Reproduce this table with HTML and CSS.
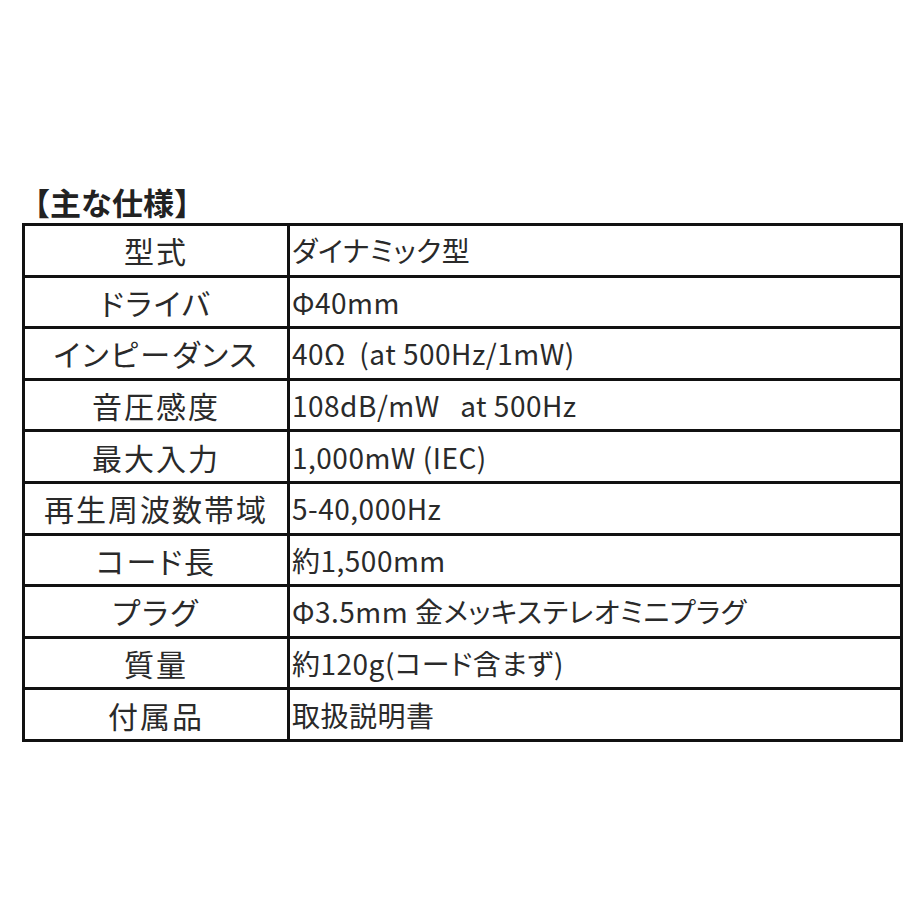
FILE: index.html
```html
<!DOCTYPE html>
<html lang="ja">
<head>
<meta charset="utf-8">
<title>主な仕様</title>
<link rel="stylesheet" href="styles.css">
</head>
<body>
<div class="page">
  <h1 class="title">【主な仕様】</h1>
  <table class="spec">
    <tbody>
      <tr><th>型式</th><td>ダイナミック型</td></tr>
      <tr><th>ドライバ</th><td>Φ40mm</td></tr>
      <tr><th>インピーダンス</th><td>40Ω&nbsp;&nbsp;(at 500Hz/1mW)</td></tr>
      <tr><th>音圧感度</th><td>108dB/mW&nbsp;&nbsp;&nbsp;at 500Hz</td></tr>
      <tr><th>最大入力</th><td>1,000mW (IEC)</td></tr>
      <tr><th>再生周波数帯域</th><td>5-40,000Hz</td></tr>
      <tr><th>コード長</th><td>約1,500mm</td></tr>
      <tr><th>プラグ</th><td>Φ3.5mm 金メッキステレオミニプラグ</td></tr>
      <tr><th>質量</th><td>約120g(コード含まず)</td></tr>
      <tr><th>付属品</th><td>取扱説明書</td></tr>
    </tbody>
  </table>
</div>
</body>
</html>
```

FILE: styles.css
```css
html, body {
  margin: 0;
  padding: 0;
  background: #ffffff;
}

.page {
  padding: 180px 0 0 22px;
  font-family: "Noto Sans CJK JP", "Noto Sans", sans-serif;
  color: #2a2a2a;
}

.title {
  margin: 0 0 0 -3px;
  font-size: 31px;
  line-height: 43px;
  height: 43px;
  font-weight: 700;
  color: #222;
}

.spec {
  border-collapse: collapse;
  width: 881px;
  table-layout: fixed;
}

.spec tr {
  height: 51.6px;
}

.spec th,
.spec td {
  border: 3px solid #111;
  padding: 0;
  line-height: 1;
  vertical-align: middle;
}

.spec th {
  width: 262px;
  font-size: 30px;
  font-weight: 400;
  text-align: center;
  font-feature-settings: "palt";
  letter-spacing: 2px;
}

.spec td {
  font-size: 28px;
  text-align: left;
  padding-left: 2px;
  font-feature-settings: "palt";
  letter-spacing: 0.5px;
}
```
